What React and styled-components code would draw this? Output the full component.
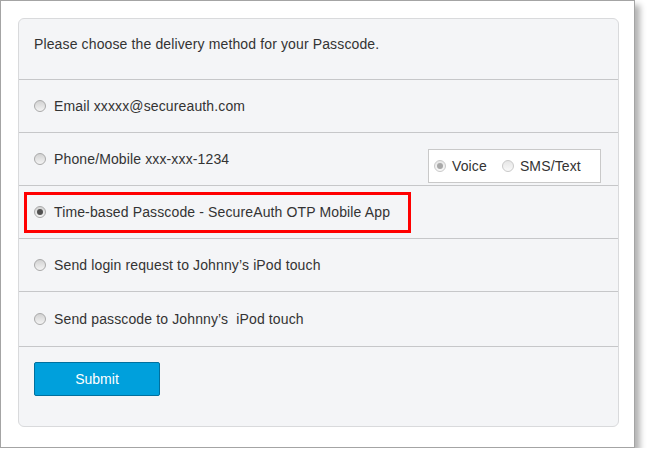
import React from 'react';
import styled, { createGlobalStyle } from 'styled-components';

const GlobalStyle = createGlobalStyle`
    html, body {
        margin: 0;
        padding: 0;
        background: #ffffff;
    }
    body {
        font-family: "Liberation Sans", Arial, sans-serif;
    }
`;

const Frame = styled.div`
    width: 635px;
    height: 448px;
    box-sizing: border-box;
    border: 1px solid #a4a4a4;
    background: #ffffff;
    box-shadow: 5px 5px 6px rgba(0, 0, 0, 0.3);
    padding: 17px;
`;

const Card = styled.div`
    width: 601px;
    height: 409px;
    box-sizing: border-box;
    border: 1px solid #d9dadc;
    border-radius: 6px;
    background: #f4f5f7;
    display: flex;
    flex-direction: column;
`;

const Header = styled.div`
    height: 60px;
    box-sizing: border-box;
    padding: 17px 15px 0;
    font-size: 14px;
    line-height: 17px;
    letter-spacing: 0.13px;
    color: #333;
`;

const Row = styled.div`
    height: ${p => p.$tall ? 55 : 53}px;
    box-sizing: border-box;
    border-top: 1px solid #c6c7c9;
    padding: 0 17px 0 15px;
    display: flex;
    align-items: center;
    justify-content: space-between;
`;

const Option = styled.label`
    display: flex;
    align-items: center;
    gap: ${p => p.$gap || 8}px;
    font-size: 14px;
    color: #333;
    line-height: 17px;
    letter-spacing: 0.13px;
    white-space: pre;
`;

const Highlight = styled.div`
    width: 387px;
    height: 41px;
    box-sizing: border-box;
    margin-left: -10px;
    border: 3px solid #ff0000;
    padding-left: 7px;
    display: flex;
    align-items: center;
`;

const Radio = styled.span`
    width: 12px;
    height: 12px;
    box-sizing: border-box;
    border-radius: 50%;
    border: 1px solid ${p => p.$faded ? '#c9c9c9' : '#a9a9a9'};
    background: ${p => p.$faded
        ? 'linear-gradient(#e6e6e6, #f9f9f9)'
        : 'linear-gradient(#d2d2d2, #f4f4f4)'};
    display: flex;
    align-items: center;
    justify-content: center;
    flex-shrink: 0;

    &::after {
        content: '';
        display: ${p => p.$checked ? 'block' : 'none'};
        width: 6px;
        height: 6px;
        border-radius: 50%;
        background: ${p => p.$faded ? '#a8a8a8' : '#505050'};
    }
`;

const ModeBox = styled.div`
    align-self: flex-end;
    margin-bottom: 2px;
    width: 173px;
    height: 34px;
    box-sizing: border-box;
    border: 1px solid #c9c9c9;
    background: #ffffff;
    display: flex;
    align-items: center;
    padding-left: 5px;
    gap: 15px;
`;

const Footer = styled.div`
    flex: 1;
    border-top: 1px solid #c6c7c9;
    padding: 15px 15px 0;
`;

const SubmitButton = styled.button`
    width: 126px;
    height: 34px;
    border: 1px solid #00709e;
    border-radius: 2px;
    background: #00a0dc;
    color: #ffffff;
    font-family: "Liberation Sans", Arial, sans-serif;
    font-size: 14px;
    padding: 0;
    cursor: pointer;
`;

const options = [
    'Email xxxxx@secureauth.com',
    'Phone/Mobile xxx-xxx-1234',
    'Time-based Passcode - SecureAuth OTP Mobile App',
    'Send login request to Johnny\u2019s iPod touch',
    'Send passcode to Johnny\u2019s  iPod touch',
];

export default function App() {
    const selected = 2;

    return (
        <>
            <GlobalStyle />
            <Frame>
                <Card>
                    <Header>Please choose the delivery method for your Passcode.</Header>
                    {options.map((text, i) => {
                        const option = (
                            <Option>
                                <Radio $checked={i === selected} />
                                {text}
                            </Option>
                        );
                        return (
                            <Row key={text} $tall={i === options.length - 1}>
                                {i === selected ? <Highlight>{option}</Highlight> : option}
                                {i === 1 && (
                                    <ModeBox>
                                        <Option $gap={6}>
                                            <Radio $checked $faded />
                                            Voice
                                        </Option>
                                        <Option $gap={6}>
                                            <Radio $faded />
                                            SMS/Text
                                        </Option>
                                    </ModeBox>
                                )}
                            </Row>
                        );
                    })}
                    <Footer>
                        <SubmitButton>Submit</SubmitButton>
                    </Footer>
                </Card>
            </Frame>
        </>
    );
}
